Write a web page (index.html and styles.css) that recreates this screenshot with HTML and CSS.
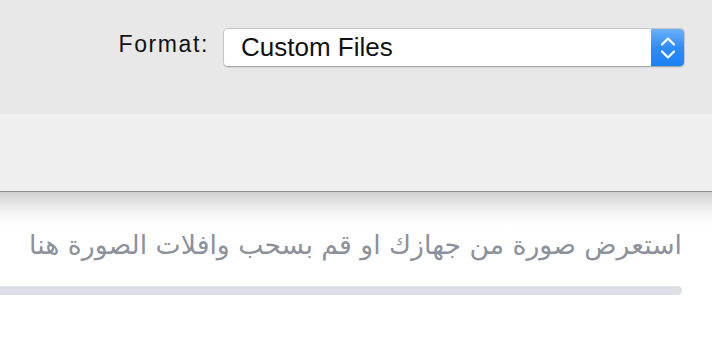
FILE: index.html
```html
<!DOCTYPE html>
<html lang="ar">
<head>
  <meta charset="UTF-8">
  <meta name="viewport" content="width=device-width, initial-scale=1.0">
  <title>Upload</title>
  <link rel="stylesheet" href="styles.css">
</head>
<body>
  <header class="toolbar">
    <div class="format-row">
      <label class="format-label" for="format">Format:</label>
      <div class="select-box" id="format">
        <span class="select-value">Custom Files</span>
        <span class="stepper">
          <svg width="16" height="30" viewBox="0 0 16 30">
            <path d="M2 11.5 L8 5.5 L14 11.5" fill="none" stroke="#fff" stroke-width="2.2" stroke-linecap="round" stroke-linejoin="round"/>
            <path d="M2 18.5 L8 24.5 L14 18.5" fill="none" stroke="#fff" stroke-width="2.2" stroke-linecap="round" stroke-linejoin="round"/>
          </svg>
        </span>
      </div>
    </div>
  </header>

  <section class="panel"></section>

  <section class="drop-zone">
    <p class="drop-text" dir="rtl">استعرض صورة من جهازك او قم بسحب وافلات الصورة هنا</p>
    <div class="progress"></div>
  </section>
</body>
</html>
```

FILE: styles.css
```css
body {
  margin: 0;
  padding: 0;
  background-color: #fff;
  font-family: "Liberation Sans", Arial, sans-serif;
  overflow: hidden;
}
.toolbar {
  background-color: #e8e8e8;
  height: 114px;
  box-sizing: border-box;
  padding: 28px 27px 0 0;
}
.format-row {
  display: flex;
  justify-content: flex-end;
  align-items: center;
  gap: 14px;
}
.format-label {
  font-size: 23px;
  letter-spacing: 1.6px;
  color: #111;
  margin-top: -7px;
}
.select-box {
  display: flex;
  align-items: stretch;
  width: 462px;
  height: 39px;
  box-sizing: border-box;
  background-color: #fff;
  border: 1px solid #c6c6c6;
  border-bottom-color: #aaa;
  border-radius: 5px;
  box-shadow: 0 1px 1px rgba(0, 0, 0, 0.08);
  overflow: hidden;
}
.select-value {
  flex: 1;
  font-size: 26px;
  color: #111;
  padding-left: 17px;
  line-height: 37px;
}
.stepper {
  width: 33px;
  display: flex;
  align-items: center;
  justify-content: center;
  background: linear-gradient(#6cb0fa, #2f8cf7 50%, #1c80f5);
}
.panel {
  background-color: #efefef;
  height: 77px;
  border-bottom: 1px solid #8f8f8f;
}
.drop-zone {
  background: linear-gradient(#d2d2d2, #f4f4f4 20px, #fff 34px);
  height: 150px;
  padding-top: 37px;
  box-sizing: border-box;
}
.drop-text {
  margin: 0;
  padding-right: 30px;
  font-family: "DejaVu Sans", sans-serif;
  font-size: 26.7px;
  color: #8c919b;
  text-align: right;
}
.progress {
  margin-top: 26px;
  width: 682px;
  height: 9px;
  background-color: #dcdfe5;
  border-radius: 0 5px 5px 0;
}
```
